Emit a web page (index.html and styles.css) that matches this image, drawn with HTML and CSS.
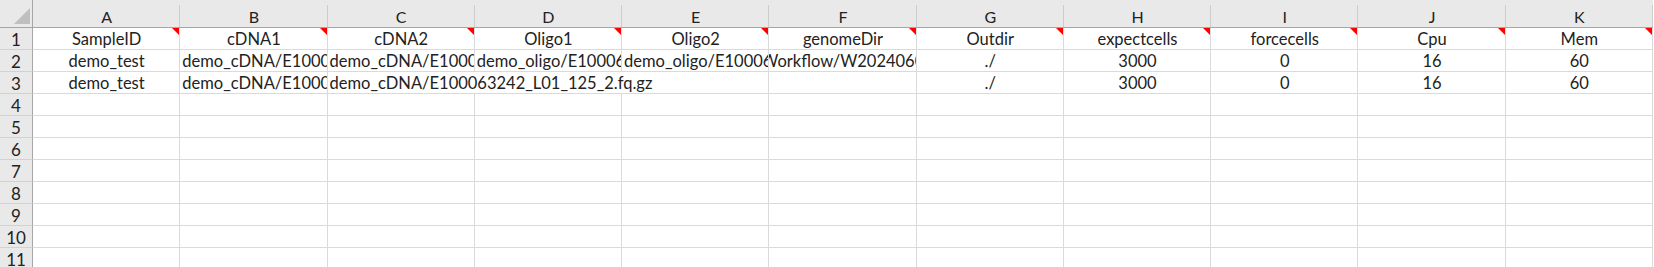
FILE: index.html
```html
<!DOCTYPE html>
<html lang="en">
<head>
<meta charset="utf-8">
<title>sample sheet</title>
<link rel="stylesheet" href="styles.css">
</head>
<body>
<div class="sheet">
  <!-- header row -->
  <div class="corner"><svg width="32" height="27" viewBox="0 0 32 27"><polygon points="14,24 30,24 30,8" fill="#bfbfbf"/></svg></div>
  <div class="col-head">A</div>
  <div class="col-head">B</div>
  <div class="col-head">C</div>
  <div class="col-head">D</div>
  <div class="col-head">E</div>
  <div class="col-head">F</div>
  <div class="col-head">G</div>
  <div class="col-head">H</div>
  <div class="col-head">I</div>
  <div class="col-head">J</div>
  <div class="col-head">K</div>

  <!-- row 1: field names, each with a comment marker -->
  <div class="row-head">1</div>
  <div class="cell center note">SampleID</div>
  <div class="cell center note">cDNA1</div>
  <div class="cell center note">cDNA2</div>
  <div class="cell center note">Oligo1</div>
  <div class="cell center note">Oligo2</div>
  <div class="cell center note">genomeDir</div>
  <div class="cell center note">Outdir</div>
  <div class="cell center note">expectcells</div>
  <div class="cell center note">forcecells</div>
  <div class="cell center note">Cpu</div>
  <div class="cell center note">Mem</div>

  <!-- row 2 -->
  <div class="row-head">2</div>
  <div class="cell center">demo_test</div>
  <div class="cell">demo_cDNA/E100063242_L01_125_1.fq.gz</div>
  <div class="cell">demo_cDNA/E100063242_L01_125_2.fq.gz</div>
  <div class="cell">demo_oligo/E100063242_L01_125_1.fq.gz</div>
  <div class="cell">demo_oligo/E100063242_L01_125_2.fq.gz</div>
  <div class="cell shifted">Workflow/W20240605/reference</div>
  <div class="cell center">./</div>
  <div class="cell center">3000</div>
  <div class="cell center">0</div>
  <div class="cell center">16</div>
  <div class="cell center">60</div>

  <!-- row 3: cDNA2 path runs on over the empty oligo columns -->
  <div class="row-head">3</div>
  <div class="cell center">demo_test</div>
  <div class="cell">demo_cDNA/E100063242_L01_125_1.fq.gz</div>
  <div class="cell spill">demo_cDNA/E100063242_L01_125_2.fq.gz</div>
  <div class="cell"></div>
  <div class="cell center">./</div>
  <div class="cell center">3000</div>
  <div class="cell center">0</div>
  <div class="cell center">16</div>
  <div class="cell center">60</div>

  <!-- empty rows -->
  <div class="row-head">4</div>
  <div class="cell"></div><div class="cell"></div><div class="cell"></div><div class="cell"></div><div class="cell"></div><div class="cell"></div><div class="cell"></div><div class="cell"></div><div class="cell"></div><div class="cell"></div><div class="cell"></div>
  <div class="row-head">5</div>
  <div class="cell"></div><div class="cell"></div><div class="cell"></div><div class="cell"></div><div class="cell"></div><div class="cell"></div><div class="cell"></div><div class="cell"></div><div class="cell"></div><div class="cell"></div><div class="cell"></div>
  <div class="row-head">6</div>
  <div class="cell"></div><div class="cell"></div><div class="cell"></div><div class="cell"></div><div class="cell"></div><div class="cell"></div><div class="cell"></div><div class="cell"></div><div class="cell"></div><div class="cell"></div><div class="cell"></div>
  <div class="row-head">7</div>
  <div class="cell"></div><div class="cell"></div><div class="cell"></div><div class="cell"></div><div class="cell"></div><div class="cell"></div><div class="cell"></div><div class="cell"></div><div class="cell"></div><div class="cell"></div><div class="cell"></div>
  <div class="row-head">8</div>
  <div class="cell"></div><div class="cell"></div><div class="cell"></div><div class="cell"></div><div class="cell"></div><div class="cell"></div><div class="cell"></div><div class="cell"></div><div class="cell"></div><div class="cell"></div><div class="cell"></div>
  <div class="row-head">9</div>
  <div class="cell"></div><div class="cell"></div><div class="cell"></div><div class="cell"></div><div class="cell"></div><div class="cell"></div><div class="cell"></div><div class="cell"></div><div class="cell"></div><div class="cell"></div><div class="cell"></div>
  <div class="row-head">10</div>
  <div class="cell"></div><div class="cell"></div><div class="cell"></div><div class="cell"></div><div class="cell"></div><div class="cell"></div><div class="cell"></div><div class="cell"></div><div class="cell"></div><div class="cell"></div><div class="cell"></div>
  <div class="row-head">11</div>
  <div class="cell"></div><div class="cell"></div><div class="cell"></div><div class="cell"></div><div class="cell"></div><div class="cell"></div><div class="cell"></div><div class="cell"></div><div class="cell"></div><div class="cell"></div><div class="cell"></div>
</div>
</body>
</html>
```

FILE: styles.css
```css
html, body {
  margin: 0;
  padding: 0;
  background: #ffffff;
  overflow: hidden;
}

body {
  font-family: Lato, "Liberation Sans", Arial, sans-serif;
  color: #222222;
}

/* spreadsheet grid: row-number column + 11 data columns */
.sheet {
  display: grid;
  grid-template-columns: 33px repeat(11, 147.27px);
  grid-template-rows: 28px repeat(11, 22px);
}

.sheet > div {
  box-sizing: border-box;
  min-width: 0;
}

/* top-left select-all box */
.corner {
  background: #e9e9e9;
  border-right: 1px solid #a6a6a6;
  border-bottom: 1px solid #a6a6a6;
  overflow: hidden;
}

.corner svg {
  display: block;
}

/* column letters */
.col-head {
  background:
    linear-gradient(#cdcdcd, #cdcdcd) right bottom / 1px 22px no-repeat,
    #e9e9e9;
  border-bottom: 1px solid #a6a6a6;
  text-align: center;
  font-size: 16px;
  line-height: 19px;
  padding-top: 7px;
  overflow: hidden;
}

/* row numbers */
.row-head {
  background: #e9e9e9;
  border-right: 1px solid #a6a6a6;
  border-bottom: 1px solid #d2d2d2;
  text-align: center;
  font-size: 17px;
  line-height: 21px;
  padding-top: 1px;
  overflow: hidden;
}

/* data cells */
.cell {
  position: relative;
  border-right: 1px solid #dadada;
  border-bottom: 1px solid #dadada;
  font-size: 16.5px;
  line-height: 21px;
  padding: 1px 1px 0 2px;
  white-space: nowrap;
  overflow: hidden;
}

.center {
  text-align: center;
}

/* long text that runs on across the next empty cells */
.spill {
  grid-column: span 3;
}

/* centred text wider than its cell, cut on the left */
.shifted {
  text-indent: -8px;
  padding-left: 0;
}

/* red comment marker in the top-right corner */
.note::after {
  content: "";
  position: absolute;
  top: 0;
  right: 0;
  width: 0;
  height: 0;
  border-top: 7px solid #ff0000;
  border-left: 7px solid transparent;
}
```
